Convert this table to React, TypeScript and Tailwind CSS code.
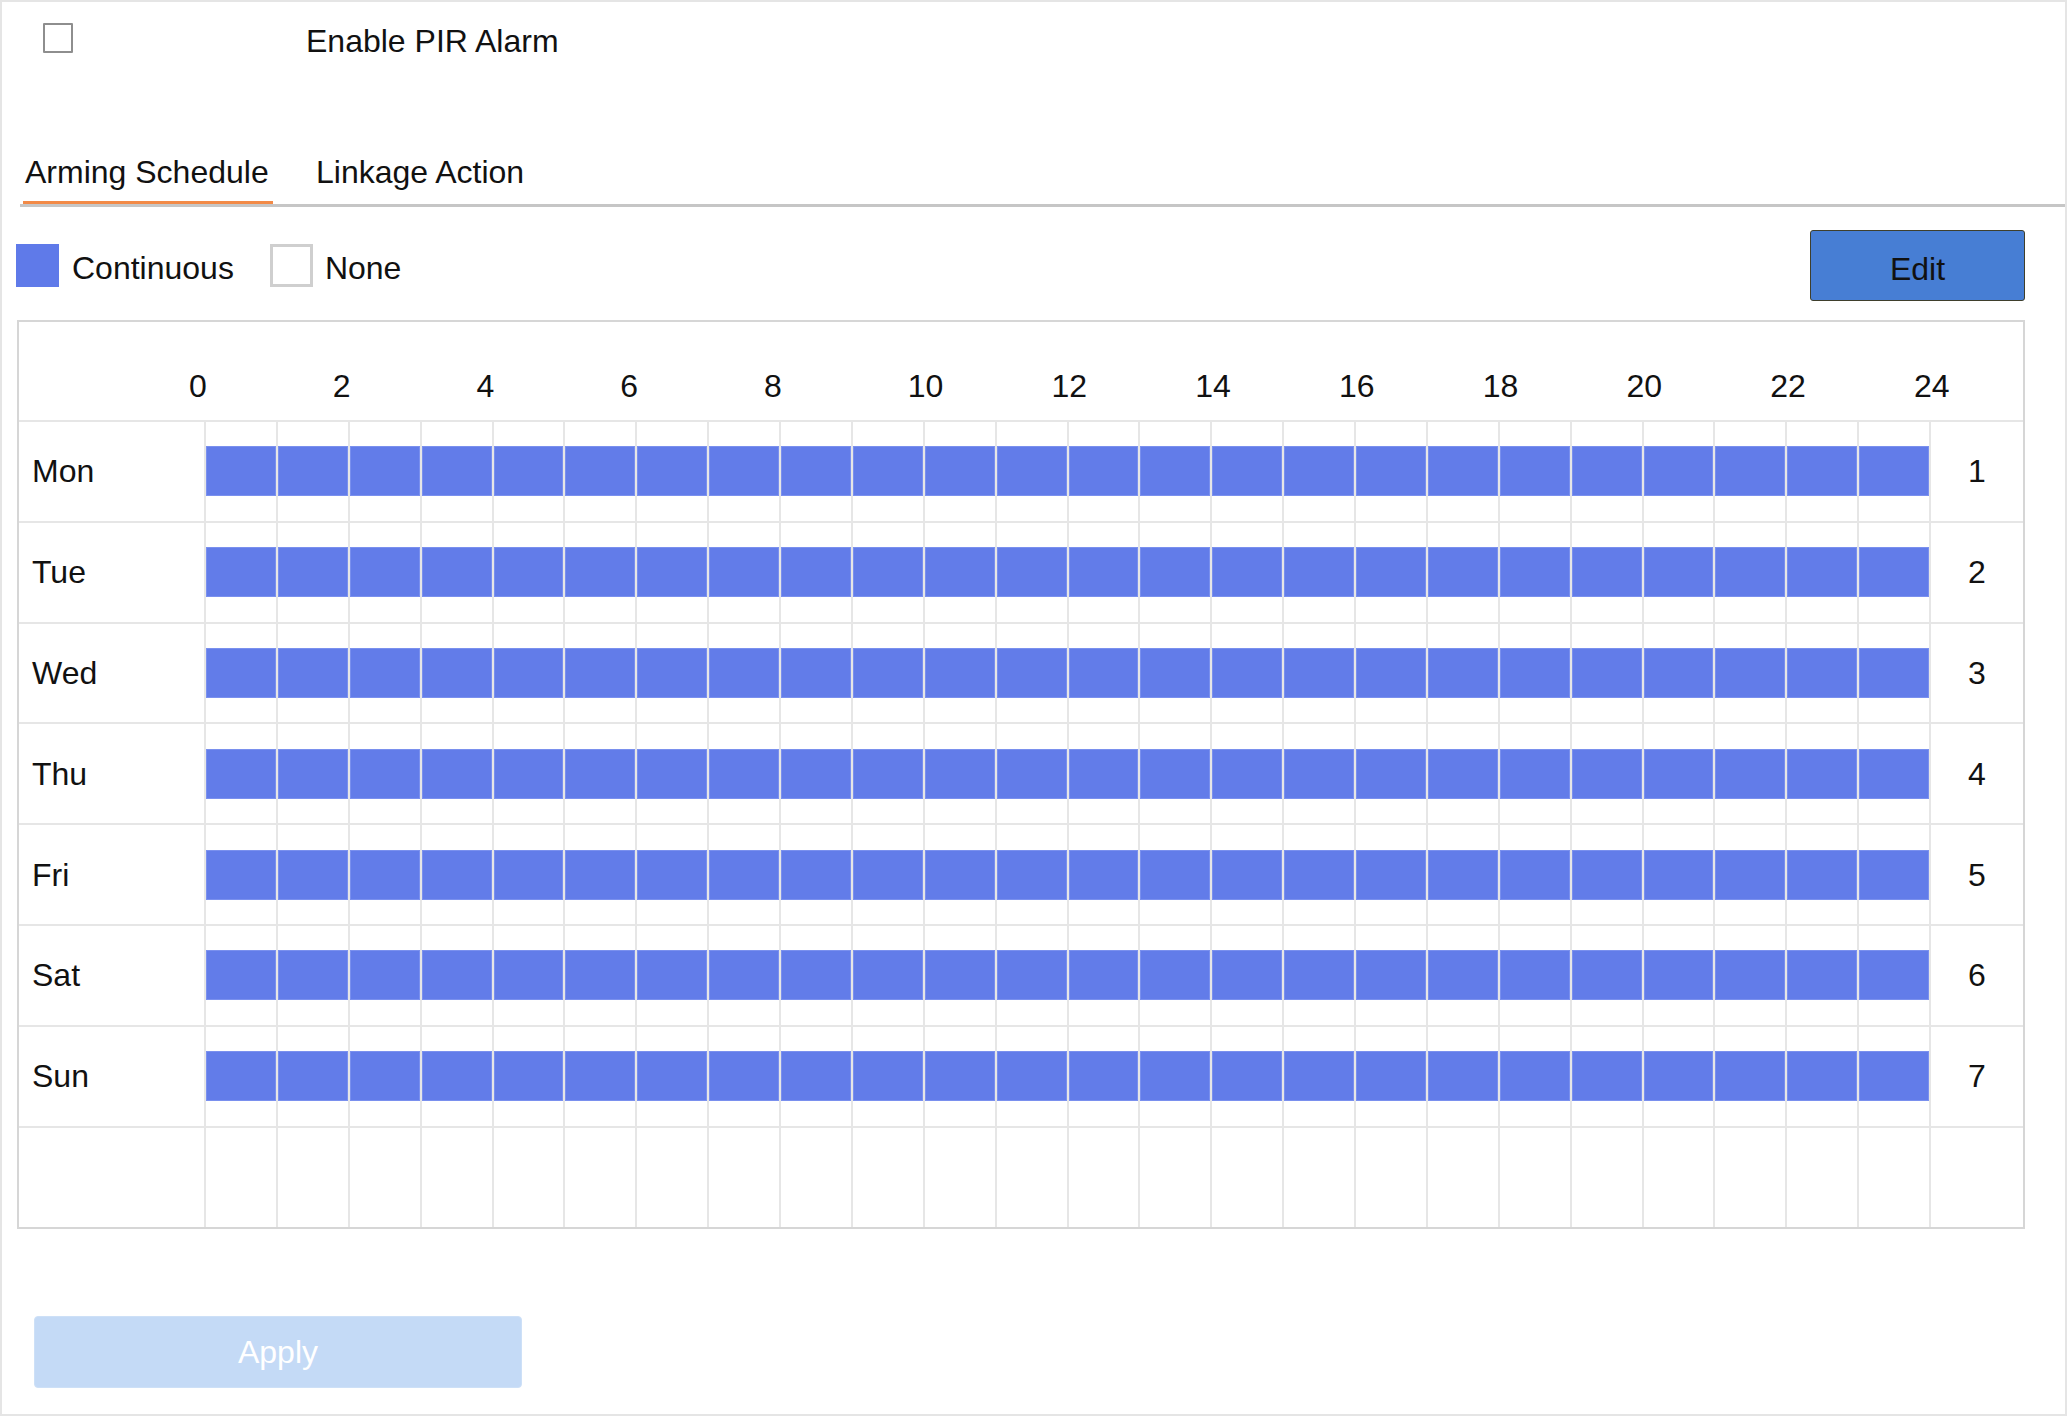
import React from "react";

const hours = [0, 2, 4, 6, 8, 10, 12, 14, 16, 18, 20, 22, 24];
const days = ["Mon", "Tue", "Wed", "Thu", "Fri", "Sat", "Sun"];
const cells = Array.from({ length: 24 }, (_, i) => i);

function DayRow({ day, index }: { day: string; index: number }) {
  return (
    <div className="flex h-[100.8px] border-b-2 border-[#e6e6e6]">
      <div className="w-[185px] flex items-center pl-[13px]">{day}</div>
      {cells.map((c) => (
        <div key={c} className="flex-1 border-l-2 border-[#e6e6e6] flex items-center">
          <div className="w-full h-[50px] bg-[#627ce9] border border-[#7a90ee]" />
        </div>
      ))}
      <div className="w-[94px] border-l-2 border-[#e6e6e6] flex items-center justify-center">
        {index + 1}
      </div>
    </div>
  );
}

export default function App() {
  return (
    <div className="w-[2067px] h-[1416px] bg-white border-2 border-[#e5e5e5] font-['Liberation_Sans',Arial,sans-serif] text-[32px] leading-none text-[#111] flex flex-col overflow-hidden">
      {/* Enable row */}
      <div className="flex items-start pt-[21px] pl-[41px]">
        <div className="w-[30px] h-[30px] border-2 border-[#8e8e8e] rounded-[1px]" />
        <span className="ml-[233px] mt-[2px]">Enable PIR Alarm</span>
      </div>

      {/* Tabs */}
      <div className="mt-[99px] ml-[18px] flex border-b-[3px] border-[#c6c6c6]">
        <div className="ml-[3px] w-[250px] flex flex-col">
          <span className="pl-[2px]">Arming Schedule</span>
          <div className="mt-[13px] h-[3px] bg-[#f28a47]" />
        </div>
        <div className="ml-[43px]">
          <span>Linkage Action</span>
        </div>
      </div>

      {/* Legend + Edit */}
      <div className="mt-[23px] ml-[14px] mr-[40px] flex items-center h-[71px]">
        <div className="w-[43px] h-[43px] bg-[#5f7ae9]" />
        <span className="ml-[13px] mt-[5px]">Continuous</span>
        <div className="ml-[36px] w-[43px] h-[43px] border-[3px] border-[#cfcfcf]" />
        <span className="ml-[12px] mt-[5px]">None</span>
        <button className="ml-auto w-[215px] h-[71px] bg-[#477ed4] border border-[#3f3f2c] rounded-[3px] flex items-center justify-center pt-[6px] text-[#111]">
          Edit
        </button>
      </div>

      {/* Schedule table */}
      <div className="mt-[19px] ml-[15px] w-[2008px] border-2 border-[#d6d6d6] flex flex-col">
        <div className="h-[100px] border-b-2 border-[#e6e6e6] flex pl-[170px] pt-[48px]">
          {hours.map((h) => (
            <div key={h} className="w-[143.75px] shrink-0 text-left">
              {h}
            </div>
          ))}
        </div>
        {days.map((d, i) => (
          <DayRow key={d} day={d} index={i} />
        ))}
        <div className="flex h-[99px]">
          <div className="w-[185px]" />
          {cells.map((c) => (
            <div key={c} className="flex-1 border-l-2 border-[#e6e6e6]" />
          ))}
          <div className="w-[94px] border-l-2 border-[#e6e6e6]" />
        </div>
      </div>

      {/* Apply */}
      <div className="mt-[87px] ml-[32px] w-[488px] h-[72px] rounded-[4px] bg-[#c4daf6] border border-[#cde0f7] text-white flex items-center justify-center">
        Apply
      </div>
    </div>
  );
}
